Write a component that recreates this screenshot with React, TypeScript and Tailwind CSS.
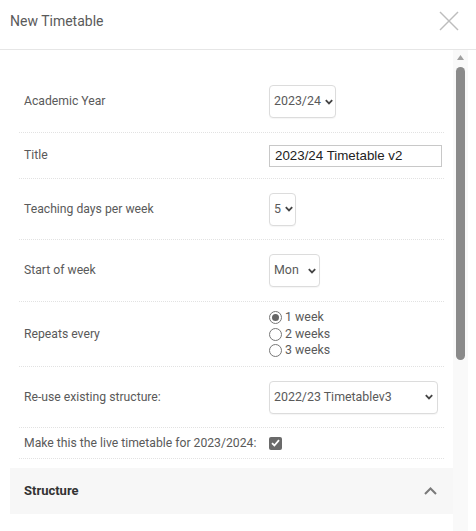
import React from "react";

function Chevron() {
  return (
    <svg width="8" height="6" viewBox="0 0 8 6" className="shrink-0">
      <polyline points="0.8,1.2 4,4.4 7.2,1.2" fill="none" stroke="#444" strokeWidth="1.8" />
    </svg>
  );
}

function Select({ value, className }: { value: string; className: string }) {
  return (
    <div
      className={
        "flex items-center justify-between gap-[4px] h-[33px] rounded-[4px] border border-[#dcdcdc] bg-white pl-[4px] text-[12.4px] text-[#5a5a5a] shadow-[0_1px_1px_rgba(0,0,0,0.04)] " +
        className
      }
    >
      <span className="whitespace-nowrap">{value}</span>
      <Chevron />
    </div>
  );
}

function Row({ label, h, children }: { label: string; h: string; children: React.ReactNode }) {
  return (
    <div className={"flex items-center border-b border-dotted border-[#e2e2e2] " + h}>
      <div className="w-[250px] shrink-0 pl-[5px] text-[12.2px] text-[#5a5a5a] whitespace-nowrap">{label}</div>
      <div className="flex-1 flex items-center">{children}</div>
    </div>
  );
}

function Radio({ checked, label }: { checked?: boolean; label: string }) {
  return (
    <div className="flex items-center h-[16.5px]">
      <span className="w-[13px] h-[13px] rounded-full border border-[#777] bg-white flex items-center justify-center mr-[3px]">
        {checked && <span className="w-[7px] h-[7px] rounded-full bg-[#666]" />}
      </span>
      <span className="text-[12.4px] text-[#5a5a5a] leading-none">{label}</span>
    </div>
  );
}

export default function App() {
  return (
    <div className="w-[476px] h-[531px] bg-white overflow-hidden font-['Roboto',sans-serif]">
      <div className="h-[50px] border-b border-[#e6e6e6] flex items-start justify-between pl-[10px] pr-[17px] pt-[10px]">
        <div className="text-[14px] leading-[22px] text-[#5a5a5a]">New Timetable</div>
        <svg width="20" height="20" viewBox="0 0 20 20" className="mt-[1px]">
          <line x1="1" y1="1" x2="19" y2="19" stroke="#bdbdbd" strokeWidth="1.4" />
          <line x1="19" y1="1" x2="1" y2="19" stroke="#bdbdbd" strokeWidth="1.4" />
        </svg>
      </div>
      <div className="flex h-[481px]">
        <div className="w-[453px] pl-[10px] pt-[21px]">
          <div className="pl-[9px] pr-[9px]">
            <Row label="Academic Year" h="h-[62px]">
              <Select value="2023/24" className="w-[67px] pr-[3px]" />
            </Row>
            <Row label="Title" h="h-[46px]">
              <div className="w-[173px] h-[22px] border border-[#c8c8c8] flex items-center pl-[5px] font-['Liberation_Sans',sans-serif] text-[13.33px] text-[#222]">
                2023/24 Timetable v2
              </div>
            </Row>
            <Row label="Teaching days per week" h="h-[61px]">
              <Select value="5" className="w-[27px] pr-[3px]" />
            </Row>
            <Row label="Start of week" h="h-[62px]">
              <Select value="Mon" className="w-[51px] pr-[3px]" />
            </Row>
            <Row label="Repeats every" h="h-[65px]">
              <div className="flex flex-col">
                <Radio checked label="1 week" />
                <Radio label="2 weeks" />
                <Radio label="3 weeks" />
              </div>
            </Row>
            <Row label="Re-use existing structure:" h="h-[61px]">
              <Select value="2022/23 Timetablev3" className="w-[169px] pr-[4px]" />
            </Row>
            <Row label="Make this the live timetable for 2023/2024:" h="h-[31px]">
              <span className="w-[13px] h-[13px] rounded-[2px] bg-[#6a6a6a] flex items-center justify-center">
                <svg width="9" height="8" viewBox="0 0 9 8">
                  <polyline points="1,4.2 3.4,6.5 8,1.2" fill="none" stroke="#fff" strokeWidth="1.8" />
                </svg>
              </span>
            </Row>
          </div>
          <div className="mt-[9px] h-[46px] bg-[#f7f7f7] flex items-center justify-between pl-[14px] pr-[16px]">
            <span className="text-[13px] font-bold text-[#333]">Structure</span>
            <svg width="13" height="8" viewBox="0 0 13 8">
              <polyline points="1,7 6.5,1.5 12,7" fill="none" stroke="#7a7a7a" strokeWidth="2" />
            </svg>
          </div>
        </div>
        <div className="w-[15px] bg-[#f9f9f9] flex flex-col items-center pt-[5px]">
          <svg width="7" height="5" viewBox="0 0 7 5">
            <polygon points="3.5,0 7,5 0,5" fill="#a0a0a0" />
          </svg>
          <div className="mt-[7px] w-[9px] h-[293px] rounded-full bg-[#8a8a8a]" />
        </div>
        <div className="flex-1 bg-white" />
      </div>
    </div>
  );
}
